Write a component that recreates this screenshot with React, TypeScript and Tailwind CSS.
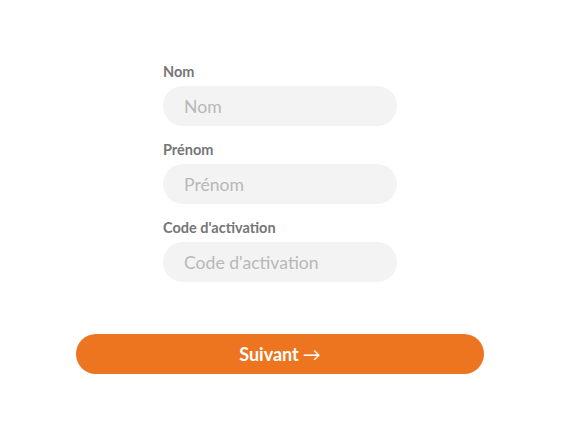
const fields = [
    { label: 'Nom', placeholder: 'Nom' },
    { label: 'Prénom', placeholder: 'Prénom' },
    { label: "Code d'activation", placeholder: "Code d'activation" },
];

export default function App() {
    return (
        <div className="min-h-screen bg-white flex flex-col items-center pt-[62px] font-['Lato','Liberation_Sans',sans-serif]">
            <div className="w-[234px] ml-[-2px] flex flex-col gap-[14px]">
                {fields.map((f) => (
                    <div key={f.label} className="flex flex-col">
                        <label className="text-[14.5px] leading-[19px] font-bold text-[#767676] mb-[5px]">{f.label}</label>
                        <input
                            placeholder={f.placeholder}
                            className="h-10 w-full rounded-full bg-[#f3f3f3] px-[21px] text-[17.6px] text-[#555] placeholder:text-[#b8b8b8] outline-none"
                        />
                    </div>
                ))}
            </div>
            <button className="mt-[52px] ml-[-2px] h-10 w-[408px] rounded-full bg-[#ed7520] text-white text-[18px] font-bold flex items-center justify-center gap-1">
                Suivant <span className="font-normal">→</span>
            </button>
        </div>
    );
}
